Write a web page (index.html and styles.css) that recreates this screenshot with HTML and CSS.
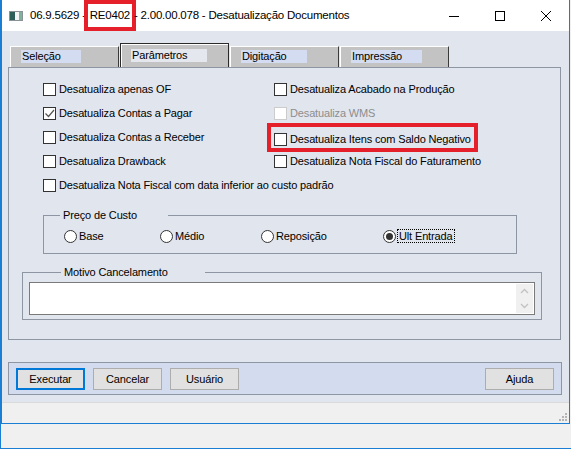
FILE: index.html
```html
<!DOCTYPE html>
<html>
	<head>
		<meta charset="utf-8">
		<title>Desatualização Documentos</title>
		<link rel="stylesheet" href="styles.css">
	</head>
	<body>
		<div class="screen">
		<div class="dialog">
			<div class="titlebar">
				<svg class="app-icon" width="14" height="10" viewBox="0 0 14 10">
					<rect x="0.5" y="0.5" width="13" height="9" fill="#dfe3e6" stroke="#8a9298"/>
					<rect x="1" y="1" width="5" height="8" fill="#2f5f5a"/>
					<rect x="6" y="1" width="4" height="8" fill="#f4f6f7"/>
					<rect x="10" y="1" width="3" height="8" fill="#7fb39c"/>
				</svg>
				<span class="title">06.9.5629 - <span class="mark">RE0402</span> - 2.00.00.078 - Desatualização Documentos</span>
				<div class="caption">
					<span class="cap-btn">
						<svg width="12" height="12" viewBox="0 0 12 12"><path d="M1 6.5h10" stroke="#000" stroke-width="1"/></svg>
					</span>
					<span class="cap-btn">
						<svg width="12" height="12" viewBox="0 0 12 12"><rect x="1.5" y="1.5" width="9" height="9" fill="none" stroke="#000"/></svg>
					</span>
					<span class="cap-btn">
						<svg width="12" height="12" viewBox="0 0 12 12"><path d="M1 1l10 10M11 1L1 11" stroke="#000" stroke-width="1"/></svg>
					</span>
				</div>
			</div>

			<div class="client">
				<div class="tabs">
					<div class="tab"><span>Seleção</span></div>
					<div class="tab active"><span>Parâmetros</span></div>
					<div class="tab"><span>Digitação</span></div>
					<div class="tab"><span>Impressão</span></div>
				</div>

				<div class="panel">
					<div class="checks">
						<label class="check"><span class="box"></span>Desatualiza apenas OF</label>
						<label class="check"><span class="box"></span>Desatualiza Acabado na Produção</label>
						<label class="check"><span class="box checked"><svg width="11" height="11" viewBox="0 0 11 11"><path d="M1.5 5.5l3 3 5.5-6.5" fill="none" stroke="#555" stroke-width="1.2"/></svg></span>Desatualiza Contas a Pagar</label>
						<label class="check disabled"><span class="box"></span>Desatualiza WMS</label>
						<label class="check"><span class="box"></span>Desatualiza Contas a Receber</label>
						<div><label class="check marked"><span class="box"></span>Desatualiza Itens com Saldo Negativo</label></div>
						<label class="check"><span class="box"></span>Desatualiza Drawback</label>
						<label class="check"><span class="box"></span>Desatualiza Nota Fiscal do Faturamento</label>
						<label class="check wide"><span class="box"></span>Desatualiza Nota Fiscal com data inferior ao custo padrão</label>
					</div>

					<fieldset class="group price">
						<legend>Preço de Custo</legend>
						<div class="radios">
							<label class="radio"><span class="dot"></span>Base</label>
							<label class="radio"><span class="dot"></span>Médio</label>
							<label class="radio"><span class="dot"></span>Reposição</label>
							<label class="radio on"><span class="dot"></span><span class="focus">Ult Entrada</span></label>
						</div>
					</fieldset>

					<fieldset class="group motivo">
						<legend>Motivo Cancelamento</legend>
						<div class="memo">
							<div class="memo-text"></div>
							<div class="vscroll">
								<svg width="9" height="6" viewBox="0 0 9 6"><path d="M1 5l3.5-3.5L8 5" fill="none" stroke="#c2c2c2" stroke-width="1.3"/></svg>
								<svg width="9" height="6" viewBox="0 0 9 6"><path d="M1 1l3.5 3.5L8 1" fill="none" stroke="#c2c2c2" stroke-width="1.3"/></svg>
							</div>
						</div>
					</fieldset>
				</div>

				<div class="buttonbar">
					<button class="btn default">Executar</button>
					<button class="btn">Cancelar</button>
					<button class="btn">Usuário</button>
					<span class="spacer"></span>
					<button class="btn">Ajuda</button>
				</div>
			</div>

			<div class="statusbar">
				<svg class="grip" width="8" height="8" viewBox="0 0 8 8">
					<rect x="6" y="0" width="2" height="2" fill="#b4b4b4"/>
					<rect x="3" y="3" width="2" height="2" fill="#b4b4b4"/>
					<rect x="6" y="3" width="2" height="2" fill="#b4b4b4"/>
					<rect x="0" y="6" width="2" height="2" fill="#b4b4b4"/>
					<rect x="3" y="6" width="2" height="2" fill="#b4b4b4"/>
					<rect x="6" y="6" width="2" height="2" fill="#b4b4b4"/>
				</svg>
			</div>
		</div>
		</div>
	</body>
</html>
```

FILE: styles.css
```css
*{
    margin:0;
    padding:0;
    box-sizing:border-box;
}
body{
    width:571px;
    height:449px;
    overflow:hidden;
    background:#f0f0f0;
    font-family:"Liberation Sans", Arial, sans-serif;
    font-size:11px;
    letter-spacing:-0.14px;
    color:#000;
}
.screen{
    height:449px;
    border-left:1px solid #1a7fd4;
    border-bottom:1px solid #1a7fd4;
}
.dialog{
    width:569px;
    height:424px;
    border-left:1px solid #1a7fd4;
    border-right:1px solid #1a7fd4;
    border-bottom:1px solid #1a7fd4;
    display:flex;
    flex-direction:column;
}

/* barra de título */
.titlebar{
    height:31px;
    background:#fff;
    display:flex;
    align-items:center;
    font-size:11.5px;
    letter-spacing:-0.22px;
}
.app-icon{
    margin-left:7px;
    margin-right:7px;
}
.title{
    flex:1;
    white-space:nowrap;
}
.mark{
    display:inline-block;
    height:31px;
    line-height:23px;
    border:4px solid #e5202a;
    padding:0 2px;
    margin:0 -5px;
    vertical-align:middle;
}
.caption{
    display:flex;
}
.cap-btn{
    width:46px;
    height:31px;
    display:flex;
    align-items:center;
    justify-content:center;
}

/* área cliente */
.client{
    background:#e1e5ee;
    padding:12px 7px 7px 6px;
}
.tabs{
    height:24px;
    display:flex;
    align-items:flex-end;
    padding-left:2px;
}
.tab{
    width:109px;
    height:21px;
    margin-right:1px;
    background:#c3c3c3;
    border-top:1px solid #fff;
    border-left:1px solid #fff;
    border-right:1px solid #3a3a3a;
    padding:3px 0 0 10px;
}
.tab span{
    display:inline-block;
    background:#d3dcf0;
    padding:0 20px 0 1px;
    line-height:13px;
}
.tab.active{
    height:24px;
    border:1px solid #2a2a2a;
    border-bottom:none;
    box-shadow:inset 1px 1px 0 #fff;
    padding-top:5px;
}
.tab.active span{
    background:#e4e7ee;
}

.panel{
    width:553px;
    height:273px;
    border:1px solid #8d96a2;
    padding:9px 0 0 31px;
}
.checks{
    display:grid;
    grid-template-columns:231px 1fr;
    grid-auto-rows:24px;
    align-items:center;
}
.check{
    display:flex;
    align-items:center;
    gap:3px;
    padding-left:3px;
    white-space:nowrap;
}
.check.wide{
    grid-column:1 / -1;
}
.box{
    width:13px;
    height:13px;
    border:1px solid #333;
    background:#fff;
    display:flex;
    align-items:center;
    justify-content:center;
}
.check.disabled{
    color:#8d8d8d;
}
.check.disabled .box{
    border-color:#cccccc;
}
.check.marked{
    display:inline-flex;
    height:21px;
    padding:4px 3px 0 3px;
    outline:4px solid #e5202a;
    vertical-align:top;
}

.group{
    border:1px solid #8d96a2;
}
.group legend{
    padding-left:3px;
}
.price{
    margin:12px 43px 0 3px;
    padding:3px 0 5px 20px;
}
.price legend{
    width:108px;
    margin-left:-4px;
}
.radios{
    display:grid;
    grid-template-columns:96px 101px 122px auto;
    height:24px;
    align-items:center;
}
.radio{
    display:flex;
    align-items:center;
    gap:2px;
}
.dot{
    width:13px;
    height:13px;
    border:1px solid #333;
    border-radius:50%;
    background:#fff;
    display:flex;
    align-items:center;
    justify-content:center;
}
.radio.on .dot::after{
    content:"";
    width:7px;
    height:7px;
    border-radius:50%;
    background:#333;
}
.focus{
    outline:1px dotted #000;
    padding:0 1px;
}

.motivo{
    margin:12px 18px 0 -18px;
    padding:4px 6px 4px 6px;
}
.motivo legend{
    width:144px;
    margin-left:32px;
}
.memo{
    height:33px;
    border:1px solid #7a7a7a;
    background:#fff;
    display:flex;
}
.memo-text{
    flex:1;
}
.vscroll{
    width:17px;
    background:#f0f0f0;
    margin:1px 1px 1px 0;
    display:flex;
    flex-direction:column;
    justify-content:space-between;
    align-items:center;
    padding:4px 0;
}

.buttonbar{
    width:554px;
    height:33px;
    margin-top:22px;
    background:#d2dcee;
    border:1px solid #8d96a2;
    display:flex;
    align-items:center;
    gap:8px;
    padding:0 7px;
}
.spacer{
    flex:1;
}
.btn{
    width:69px;
    height:22px;
    background:#e1e1e1;
    border:1px solid #adadad;
    font-family:inherit;
    font-size:11px;
    letter-spacing:-0.14px;
    color:#000;
}
.btn.default{
    border:2px solid #0078d7;
}

.statusbar{
    flex:1;
    background:#f0f0f0;
    border-top:1px solid #dadada;
    display:flex;
    justify-content:flex-end;
    align-items:flex-end;
    padding:0 2px 2px 0;
}
```
